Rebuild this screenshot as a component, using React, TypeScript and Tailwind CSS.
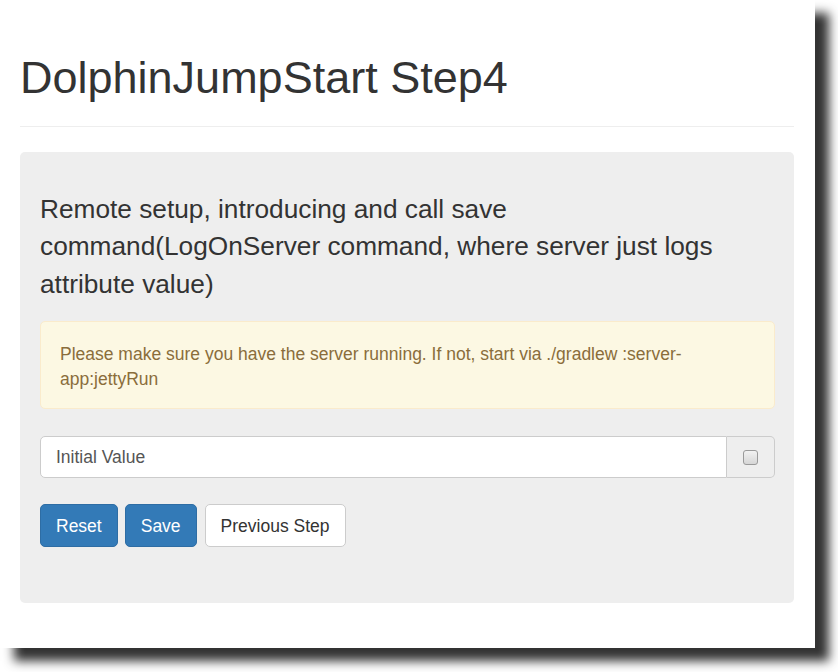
import React from "react";

function Checkbox() {
  return (
    <div className="w-[15px] h-[15px] rounded-[3px] border border-[#9a9a9a] bg-gradient-to-b from-[#f2f2f2] to-[#d6d6d6]" />
  );
}

export default function App() {
  return (
    <div className="w-[838px] h-[672px] bg-white overflow-hidden font-['Liberation_Sans',Arial,sans-serif] text-[#333]">
      <div className="w-[815px] h-[648px] bg-white shadow-[14px_13px_10px_#333] px-[20px] pr-[21px]">
        <div className="pt-[53px] pb-[23px] border-b border-[#eee]">
          <h1 className="text-[45px] leading-[49.5px] font-normal">
            DolphinJumpStart Step4
          </h1>
        </div>

        <div className="mt-[25px] bg-[#eee] rounded-[5px] pl-[20px] pr-[19px] pt-[39px] pb-[56px]">
          <p className="text-[26.25px] leading-[37.5px] max-w-[700px]">
            Remote setup, introducing and call save command(LogOnServer command, where server just logs attribute value)
          </p>

          <div className="mt-[18px] bg-[#fcf8e3] border border-[#faebcc] rounded-[5px] px-[19px] pt-[20px] pb-[16px] text-[#8a6d3b] text-[17.5px] leading-[25px]">
            Please make sure you have the server running. If not, start via ./gradlew :server-app:jettyRun
          </div>

          <div className="mt-[27px] flex h-[42px] text-[17.5px]">
            <div className="flex-1 flex items-center bg-white border border-[#ccc] rounded-l-[5px] px-[15px] pt-[1px] text-[#555]">
              Initial Value
            </div>
            <div className="w-[48px] flex items-center justify-center bg-[#eee] border border-l-0 border-[#ccc] rounded-r-[5px]">
              <Checkbox />
            </div>
          </div>

          <div className="mt-[26px] flex gap-[7px] text-[17.5px]">
            <button className="h-[42.5px] px-[15px] pt-[1px] rounded-[5px] bg-[#337ab7] border border-[#2e6da4] text-white">
              Reset
            </button>
            <button className="h-[42.5px] px-[15px] pt-[1px] rounded-[5px] bg-[#337ab7] border border-[#2e6da4] text-white">
              Save
            </button>
            <button className="ml-[1px] h-[42.5px] px-[15px] pt-[1px] rounded-[5px] bg-white border border-[#ccc] text-[#333]">
              Previous Step
            </button>
          </div>
        </div>
      </div>
    </div>
  );
}
